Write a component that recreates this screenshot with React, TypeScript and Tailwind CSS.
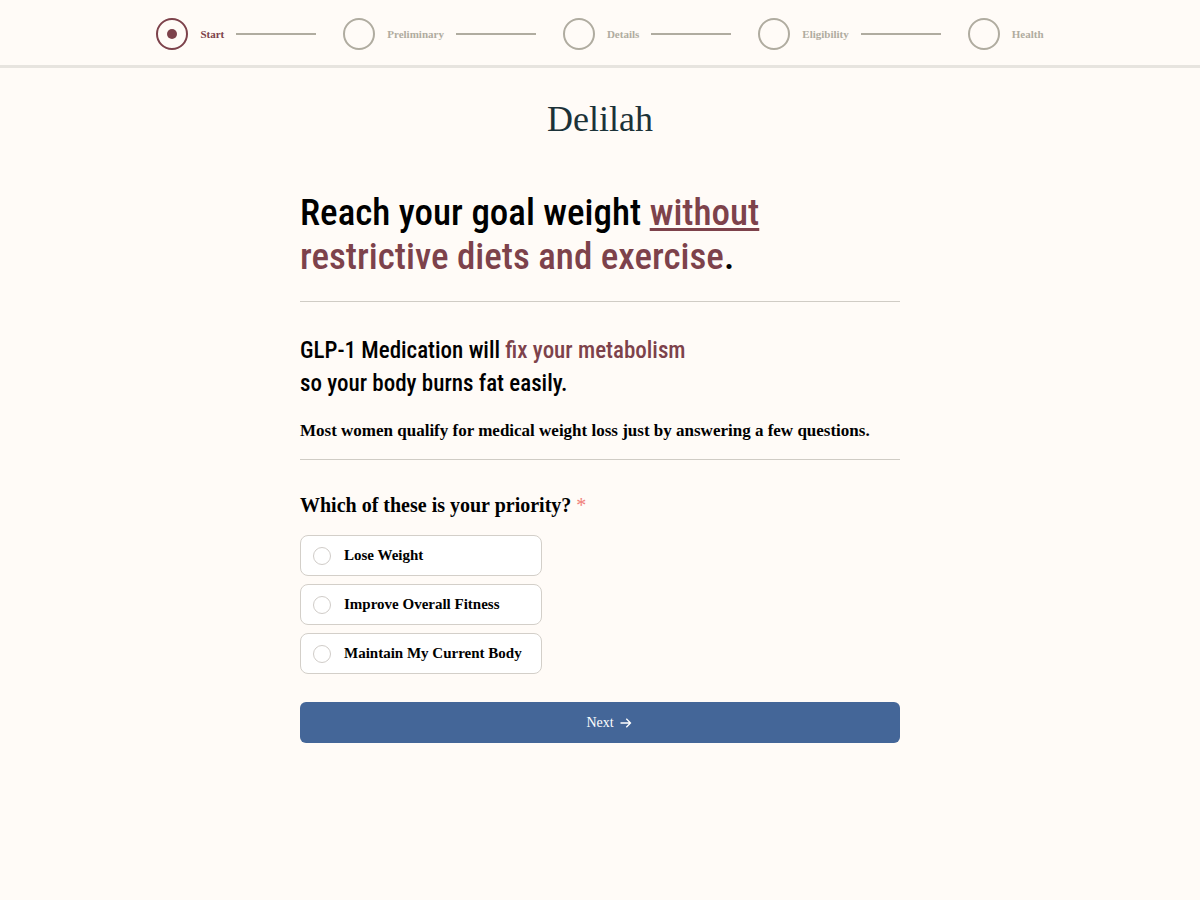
import React, { useState } from 'react';

const steps = ['Start', 'Preliminary', 'Details', 'Eligibility', 'Health'];

const options = ['Lose Weight', 'Improve Overall Fitness', 'Maintain My Current Body'];

const StepHeader = ({ current }: { current: number }) => (
  <header className="border-b-3 border-[#e7e4df] pt-[18px] pb-[15px]">
    <ol className="flex items-center justify-center gap-[27px]">
      {steps.map((step, i) => (
        <li
          key={step}
          aria-current={i === current ? 'step' : undefined}
          className={`flex items-center gap-3 ${i === current ? 'text-[#7d424b]' : 'text-[#b0aca0]'}`}
        >
          <span className="flex size-8 items-center justify-center rounded-full border-2 border-current">
            {i === current && <span className="size-2.5 rounded-full bg-current" />}
          </span>
          <span className="text-[11px] font-bold">{step}</span>
          {i < steps.length - 1 && <span className="h-0.5 w-20 bg-[#b0aca0]" />}
        </li>
      ))}
    </ol>
  </header>
);

const ArrowRight = () => (
  <svg width="12" height="12" viewBox="0 0 12 12" fill="none" stroke="currentColor" strokeWidth="1.3" aria-hidden="true">
    <path d="M0.5 6H10.5M6.3 1.8L10.5 6L6.3 10.2" />
  </svg>
);

const App = () => {
  const [priority, setPriority] = useState('');

  return (
    <div className="min-h-screen bg-[#fffbf7] font-['Liberation_Serif',serif] text-black">
      <StepHeader current={0} />

      <main className="mx-auto max-w-[600px] pt-7">
        {/* Logo */}
        <div className="text-center text-[36px] leading-[46px] text-[#1c3238]">Delilah</div>

        <h1 className="mt-[49px] font-['Roboto_Condensed','Roboto',sans-serif] text-[37px] leading-11 font-medium">
          Reach your goal weight <span className="text-[#7d424b] underline decoration-3 underline-offset-3">without</span>
          <br />
          <span className="text-[#7d424b]">restrictive diets and exercise</span>.
        </h1>

        <hr className="mt-[22px] border-[#d0ccc5]" />

        <h2 className="mt-8 font-['Roboto_Condensed','Roboto',sans-serif] text-[23px] leading-[33px] font-medium">
          GLP-1 Medication will <span className="text-[#7d424b]">fix your metabolism</span>
          <br />
          so your body burns fat easily.
        </h2>
        <p className="mt-[19px] text-[17px] leading-6 font-bold">
          Most women qualify for medical weight loss just by answering a few questions.
        </p>

        <hr className="mt-4 border-[#d0ccc5]" />

        <form onSubmit={(e) => e.preventDefault()}>
          <fieldset>
            <legend className="pt-[31px] text-xl leading-7 font-bold">
              Which of these is your priority? <span className="font-normal text-[#f0807a]">*</span>
            </legend>
            <div className="mt-4 flex w-[242px] flex-col gap-2">
              {options.map((option) => (
                <label
                  key={option}
                  className="flex h-[41px] items-center gap-[13px] rounded-lg border border-[#d3cfc9] bg-white px-3 text-[15px] font-bold"
                >
                  <input
                    type="radio"
                    name="priority"
                    value={option}
                    checked={priority === option}
                    onChange={() => setPriority(option)}
                    className="size-[18px] shrink-0 appearance-none rounded-full border border-[#d0ccc8] bg-white checked:border-[5px] checked:border-[#446698]"
                  />
                  <span className="whitespace-nowrap">{option}</span>
                </label>
              ))}
            </div>
          </fieldset>

          <button
            type="submit"
            className="mt-7 flex h-[41px] w-full items-center justify-center gap-1.5 rounded-md bg-[#446698] pl-[18px] text-sm text-white"
          >
            Next
            <ArrowRight />
          </button>
        </form>
      </main>
    </div>
  );
};

export default App;
